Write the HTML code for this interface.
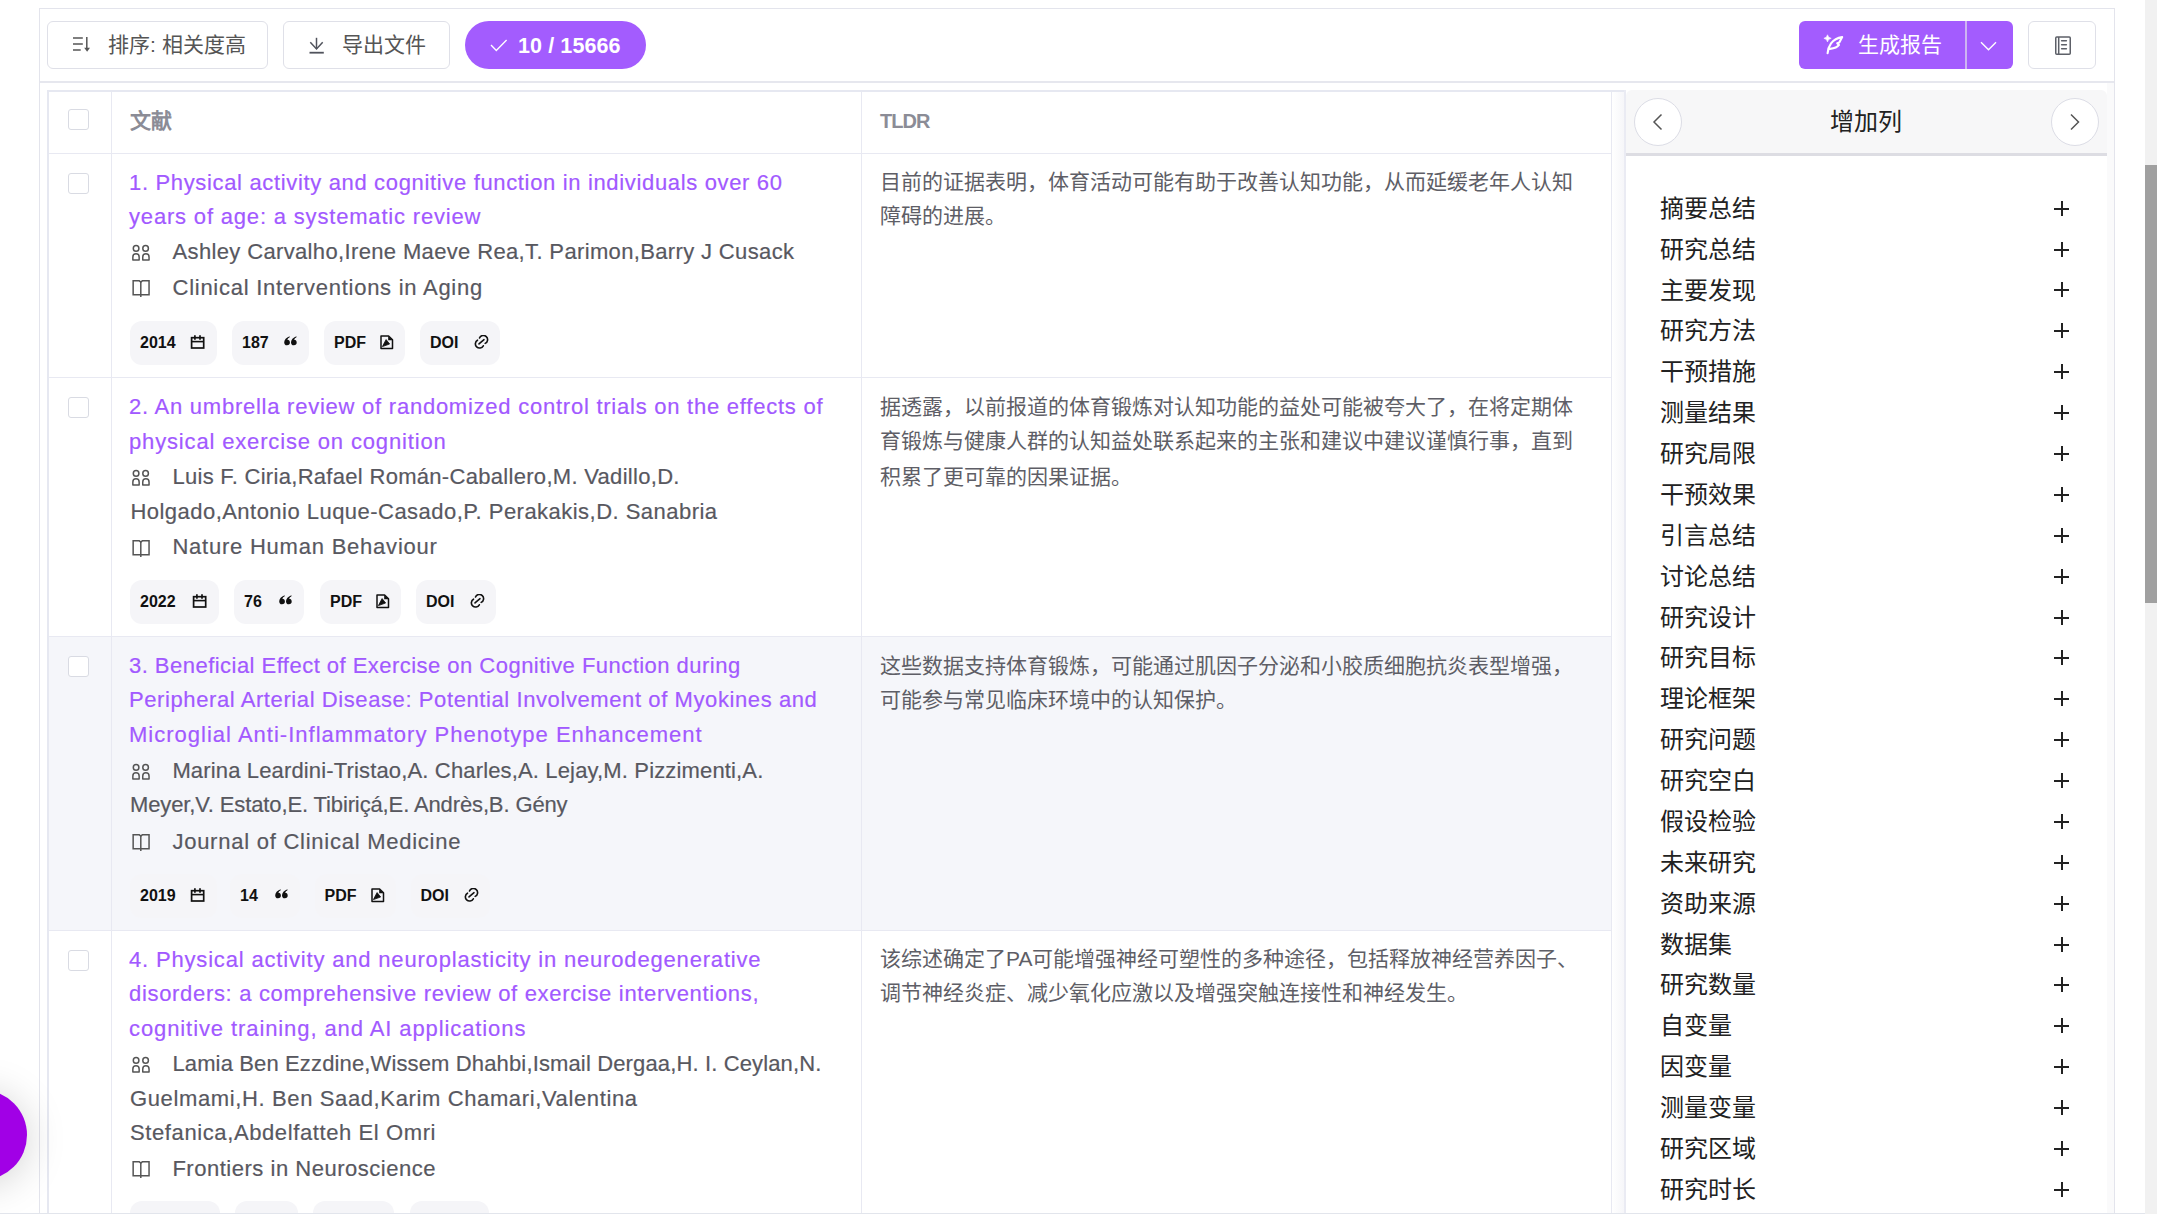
<!DOCTYPE html>
<html lang="zh-CN"><head><meta charset="utf-8"><title>文献列表</title>
<style>
html,body{margin:0;padding:0;}
body{width:2157px;height:1214px;overflow:hidden;position:relative;background:#fff;font-family:"Liberation Sans",sans-serif;}
.ab{position:absolute;}
.ln{position:absolute;white-space:nowrap;line-height:34px;font-size:22px;-webkit-text-stroke:0.2px currentColor;}
.t{color:#a259ff;}
.a{color:#58585f;}
.cj{position:absolute;white-space:nowrap;line-height:34px;font-size:21px;color:#5e5e66;}
.btn{position:absolute;box-sizing:border-box;border:1px solid #dfe0e8;border-radius:6px;background:#fff;}
.chip{position:absolute;box-sizing:border-box;height:44px;border-radius:12px;background:#f5f5f8;}
.chip span{position:absolute;font-weight:bold;font-size:16px;line-height:16px;color:#111;}
.chip svg{display:block;}
.cb{position:absolute;box-sizing:border-box;width:21px;height:21px;border:1.5px solid #d9dbe3;border-radius:3px;background:#fff;}
.it{position:absolute;left:1660px;font-size:24px;line-height:30px;color:#222;white-space:nowrap;}
.pl{position:absolute;left:2054px;width:15px;height:15px;}
.pl:before{content:"";position:absolute;left:0;top:7px;width:15px;height:2px;background:#222;}
.pl:after{content:"";position:absolute;left:6.5px;top:0;width:2px;height:15px;background:#222;}
</style></head><body>

<div class="ab" style="left:39px;top:8px;width:2076px;height:1300px;box-sizing:border-box;border:1px solid #e3e4ec;border-bottom:none"></div>
<div class="ab" style="left:40px;top:81px;width:2074px;height:2px;background:#e6e7ee"></div>
<div class="ab" style="left:49px;top:636px;width:1562px;height:294px;background:#f5f6fa"></div>
<div class="ab" style="left:47px;top:90px;width:2px;height:1200px;background:#e6e8f1"></div>
<div class="ab" style="left:47px;top:90px;width:1579px;height:2px;background:#e6e8f1"></div>
<div class="ab" style="left:111px;top:92px;width:1px;height:1200px;background:#e8e9f2"></div>
<div class="ab" style="left:861px;top:92px;width:1px;height:1200px;background:#e8e9f2"></div>
<div class="ab" style="left:1611px;top:92px;width:1px;height:1200px;background:#e8e9f2"></div>
<div class="ab" style="left:49px;top:153px;width:1562px;height:1px;background:#e8e9f2"></div>
<div class="ab" style="left:49px;top:377px;width:1562px;height:1px;background:#e8e9f2"></div>
<div class="ab" style="left:49px;top:636px;width:1562px;height:1px;background:#e8e9f2"></div>
<div class="ab" style="left:49px;top:930px;width:1562px;height:1px;background:#e8e9f2"></div>
<div class="ab" style="left:1612px;top:92px;width:12px;height:1200px;background:linear-gradient(to right,#ffffff,#f6f6f9)"></div>
<div class="ab" style="left:1624px;top:90px;width:2px;height:1200px;background:#eaebf3"></div>
<div class="cb" style="left:68px;top:109px"></div>
<div class="cb" style="left:68px;top:173px"></div>
<div class="cb" style="left:68px;top:397px"></div>
<div class="cb" style="left:68px;top:656px"></div>
<div class="cb" style="left:68px;top:950px"></div>
<div class="ab" style="left:130px;top:107px;font-size:21px;line-height:28px;font-weight:bold;color:#8b8c96">文献</div>
<div class="ab" style="left:880px;top:106.5px;font-size:20px;line-height:28px;font-weight:bold;color:#8b8c96;letter-spacing:-1px">TLDR</div>
<div class="ln t" style="left:129.0px;top:165.7px;letter-spacing:0.658px">1. Physical activity and cognitive function in individuals over 60</div>
<div class="ln t" style="left:129.0px;top:199.6px;letter-spacing:0.820px">years of age: a systematic review</div>
<div class="ln a" style="left:172.5px;top:235.2px;letter-spacing:0.356px">Ashley Carvalho,Irene Maeve Rea,T. Parimon,Barry J Cusack</div>
<div class="ln a" style="left:172.5px;top:270.5px;letter-spacing:0.744px">Clinical Interventions in Aging</div>
<div class="ln t" style="left:129.0px;top:390.2px;letter-spacing:0.757px">2. An umbrella review of randomized control trials on the effects of</div>
<div class="ln t" style="left:129.0px;top:424.8px;letter-spacing:0.842px">physical exercise on cognition</div>
<div class="ln a" style="left:172.4px;top:460.0px;letter-spacing:0.301px">Luis F. Ciria,Rafael Román-Caballero,M. Vadillo,D.</div>
<div class="ln a" style="left:130.4px;top:494.9px;letter-spacing:0.471px">Holgado,Antonio Luque-Casado,P. Perakakis,D. Sanabria</div>
<div class="ln a" style="left:172.4px;top:530.4px;letter-spacing:0.774px">Nature Human Behaviour</div>
<div class="ln t" style="left:129.0px;top:649.0px;letter-spacing:0.470px">3. Beneficial Effect of Exercise on Cognitive Function during</div>
<div class="ln t" style="left:129.0px;top:683.4px;letter-spacing:0.592px">Peripheral Arterial Disease: Potential Involvement of Myokines and</div>
<div class="ln t" style="left:129.0px;top:717.5px;letter-spacing:1.007px">Microglial Anti-Inflammatory Phenotype Enhancement</div>
<div class="ln a" style="left:172.4px;top:753.7px;letter-spacing:0.151px">Marina Leardini-Tristao,A. Charles,A. Lejay,M. Pizzimenti,A.</div>
<div class="ln a" style="left:130.0px;top:788.2px;letter-spacing:-0.124px">Meyer,V. Estato,E. Tibiriçá,E. Andrès,B. Gény</div>
<div class="ln a" style="left:172.4px;top:824.6px;letter-spacing:0.752px">Journal of Clinical Medicine</div>
<div class="ln t" style="left:129.0px;top:942.9px;letter-spacing:0.825px">4. Physical activity and neuroplasticity in neurodegenerative</div>
<div class="ln t" style="left:129.0px;top:976.9px;letter-spacing:0.680px">disorders: a comprehensive review of exercise interventions,</div>
<div class="ln t" style="left:129.0px;top:1012.0px;letter-spacing:0.905px">cognitive training, and AI applications</div>
<div class="ln a" style="left:172.4px;top:1047.0px;letter-spacing:0.138px">Lamia Ben Ezzdine,Wissem Dhahbi,Ismail Dergaa,H. I. Ceylan,N.</div>
<div class="ln a" style="left:130.0px;top:1082.0px;letter-spacing:0.625px">Guelmami,H. Ben Saad,Karim Chamari,Valentina</div>
<div class="ln a" style="left:130.0px;top:1116.0px;letter-spacing:0.604px">Stefanica,Abdelfatteh El Omri</div>
<div class="ln a" style="left:172.4px;top:1151.6px;letter-spacing:0.518px">Frontiers in Neuroscience</div>
<div class="cj" style="left:880px;top:165.2px">目前的证据表明，体育活动可能有助于改善认知功能，从而延缓老年人认知</div>
<div class="cj" style="left:880px;top:199.1px">障碍的进展。</div>
<div class="cj" style="left:880px;top:389.7px">据透露，以前报道的体育锻炼对认知功能的益处可能被夸大了，在将定期体</div>
<div class="cj" style="left:880px;top:424.3px">育锻炼与健康人群的认知益处联系起来的主张和建议中建议谨慎行事，直到</div>
<div class="cj" style="left:880px;top:459.5px">积累了更可靠的因果证据。</div>
<div class="cj" style="left:880px;top:648.5px">这些数据支持体育锻炼，可能通过肌因子分泌和小胶质细胞抗炎表型增强，</div>
<div class="cj" style="left:880px;top:682.9px">可能参与常见临床环境中的认知保护。</div>
<div class="cj" style="left:880px;top:942.4px">该综述确定了PA可能增强神经可塑性的多种途径，包括释放神经营养因子、</div>
<div class="cj" style="left:880px;top:976.4px">调节神经炎症、减少氧化应激以及增强突触连接性和神经发生。</div>
<div class="btn" style="left:47px;top:21px;width:221px;height:48px"></div>
<svg class="ab" style="left:68px;top:32px" width="28" height="26" viewBox="0 0 28 26">
<path d="M5 5.9 H14.8 M5 12 H14.8 M5 18 H12.7" stroke="#555" stroke-width="1.5"/>
<path d="M18.8 5 V16.5" stroke="#555" stroke-width="1.5"/><path d="M16.2 15.8 H22 L19.1 19.8 Z" fill="#555"/></svg>
<div class="ab" style="left:108px;top:31px;font-size:21px;line-height:28px;color:#555;white-space:nowrap">排序: 相关度高</div>
<div class="btn" style="left:283px;top:21px;width:167px;height:48px"></div>
<svg class="ab" style="left:308px;top:36px" width="18" height="19" viewBox="0 0 18 19">
<path d="M8.5 1.8 V13" stroke="#50535c" stroke-width="1.5" fill="none"/><path d="M2.3 6.3 L8.5 13 L14.7 6.3" stroke="#50535c" stroke-width="1.5" fill="none"/>
<path d="M1.5 16.7 H15.8" stroke="#50535c" stroke-width="1.8" fill="none"/></svg>
<div class="ab" style="left:342px;top:31px;font-size:21px;line-height:28px;color:#555;white-space:nowrap">导出文件</div>
<div class="ab" style="left:465px;top:21px;width:181px;height:48px;border-radius:24px;background:#a35cfe"></div>
<svg class="ab" style="left:490px;top:39px" width="18" height="13" viewBox="0 0 18 13">
<path d="M1 6 L6.3 11.5 L16.6 1" stroke="#fff" stroke-width="1.35" fill="none"/></svg>
<div class="ab" style="left:518px;top:32px;font-size:21.5px;line-height:28px;color:#fff;font-weight:bold;white-space:nowrap;letter-spacing:0.1px">10 / 15666</div>
<div class="ab" style="left:1799px;top:21px;width:214px;height:48px;border-radius:6px;background:#a35cfe"></div>
<div class="ab" style="left:1965px;top:21px;width:1.5px;height:48px;background:#cdb4f2"></div>
<svg class="ab" style="left:1818px;top:30px" width="30" height="30" viewBox="0 0 30 30">
<path d="M9.5 4.8 Q10 7.8 13.2 8.3 Q10 8.9 9.5 11.9 Q9 8.9 5.9 8.3 Q9 7.8 9.5 4.8 Z" fill="#fff" stroke="#fff" stroke-width="0.6" stroke-linejoin="round"/>
<path d="M9.6 23.3 C 10 17, 13.5 8.5, 24.2 7.1 L 21.3 12.6 L 19.2 13.2 L 21 14.9 C 19.2 17.6, 16 18.4, 12 18.9" stroke="#fff" stroke-width="2.1" fill="none" stroke-linejoin="round" stroke-linecap="round"/></svg>
<div class="ab" style="left:1858px;top:31px;font-size:21px;line-height:28px;color:#fff;white-space:nowrap">生成报告</div>
<svg class="ab" style="left:1980px;top:40px" width="18" height="11" viewBox="0 0 18 11">
<path d="M1 2.3 L8.5 9.7 L16 2.3" stroke="#fff" stroke-width="1.4" fill="none"/></svg>
<div class="btn" style="left:2028px;top:21px;width:68px;height:48px"></div>
<svg class="ab" style="left:2053px;top:35px" width="19" height="21" viewBox="0 0 19 21">
<rect x="2.75" y="1.95" width="14.5" height="17.3" rx="1" stroke="#5d6068" stroke-width="1.5" fill="none"/>
<path d="M5.7 2 V19" stroke="#5d6068" stroke-width="1.5"/>
<path d="M8.6 5.8 H13.4 M8.6 9.7 H13.4 M8.6 13.7 H13.4" stroke="#5d6068" stroke-width="1.5" stroke-linecap="round"/></svg>
<svg class="ab" style="left:131px;top:244.0px" width="20" height="18" viewBox="0 0 20 18">
<circle cx="5.1" cy="4.4" r="2.8" stroke="#555" stroke-width="1.5" fill="none"/><circle cx="14.6" cy="4.4" r="2.8" stroke="#555" stroke-width="1.5" fill="none"/>
<path d="M1.85 16 V12.9 A3.15 3.15 0 0 1 8.15 12.9 V16 Z" stroke="#555" stroke-width="1.5" fill="none" stroke-linejoin="round"/>
<path d="M11.75 16 V12.9 A3.15 3.15 0 0 1 18.05 12.9 V16 Z" stroke="#555" stroke-width="1.5" fill="none" stroke-linejoin="round"/></svg>
<svg class="ab" style="left:131px;top:468.8px" width="20" height="18" viewBox="0 0 20 18">
<circle cx="5.1" cy="4.4" r="2.8" stroke="#555" stroke-width="1.5" fill="none"/><circle cx="14.6" cy="4.4" r="2.8" stroke="#555" stroke-width="1.5" fill="none"/>
<path d="M1.85 16 V12.9 A3.15 3.15 0 0 1 8.15 12.9 V16 Z" stroke="#555" stroke-width="1.5" fill="none" stroke-linejoin="round"/>
<path d="M11.75 16 V12.9 A3.15 3.15 0 0 1 18.05 12.9 V16 Z" stroke="#555" stroke-width="1.5" fill="none" stroke-linejoin="round"/></svg>
<svg class="ab" style="left:131px;top:762.5px" width="20" height="18" viewBox="0 0 20 18">
<circle cx="5.1" cy="4.4" r="2.8" stroke="#555" stroke-width="1.5" fill="none"/><circle cx="14.6" cy="4.4" r="2.8" stroke="#555" stroke-width="1.5" fill="none"/>
<path d="M1.85 16 V12.9 A3.15 3.15 0 0 1 8.15 12.9 V16 Z" stroke="#555" stroke-width="1.5" fill="none" stroke-linejoin="round"/>
<path d="M11.75 16 V12.9 A3.15 3.15 0 0 1 18.05 12.9 V16 Z" stroke="#555" stroke-width="1.5" fill="none" stroke-linejoin="round"/></svg>
<svg class="ab" style="left:131px;top:1055.8px" width="20" height="18" viewBox="0 0 20 18">
<circle cx="5.1" cy="4.4" r="2.8" stroke="#555" stroke-width="1.5" fill="none"/><circle cx="14.6" cy="4.4" r="2.8" stroke="#555" stroke-width="1.5" fill="none"/>
<path d="M1.85 16 V12.9 A3.15 3.15 0 0 1 8.15 12.9 V16 Z" stroke="#555" stroke-width="1.5" fill="none" stroke-linejoin="round"/>
<path d="M11.75 16 V12.9 A3.15 3.15 0 0 1 18.05 12.9 V16 Z" stroke="#555" stroke-width="1.5" fill="none" stroke-linejoin="round"/></svg>
<svg class="ab" style="left:131px;top:279.0px" width="20" height="20" viewBox="0 0 20 20">
<path d="M2.15 1.85 H8.3 L9.8 3 L11.3 1.85 H18.05 V15.75 H2.15 Z" stroke="#555" stroke-width="1.5" fill="none"/>
<path d="M9.8 2.6 V18" stroke="#555" stroke-width="1.5" fill="none"/></svg>
<svg class="ab" style="left:131px;top:538.9px" width="20" height="20" viewBox="0 0 20 20">
<path d="M2.15 1.85 H8.3 L9.8 3 L11.3 1.85 H18.05 V15.75 H2.15 Z" stroke="#555" stroke-width="1.5" fill="none"/>
<path d="M9.8 2.6 V18" stroke="#555" stroke-width="1.5" fill="none"/></svg>
<svg class="ab" style="left:131px;top:833.1px" width="20" height="20" viewBox="0 0 20 20">
<path d="M2.15 1.85 H8.3 L9.8 3 L11.3 1.85 H18.05 V15.75 H2.15 Z" stroke="#555" stroke-width="1.5" fill="none"/>
<path d="M9.8 2.6 V18" stroke="#555" stroke-width="1.5" fill="none"/></svg>
<svg class="ab" style="left:131px;top:1160.1px" width="20" height="20" viewBox="0 0 20 20">
<path d="M2.15 1.85 H8.3 L9.8 3 L11.3 1.85 H18.05 V15.75 H2.15 Z" stroke="#555" stroke-width="1.5" fill="none"/>
<path d="M9.8 2.6 V18" stroke="#555" stroke-width="1.5" fill="none"/></svg>
<div class="chip" style="left:130px;top:321px;width:87.0px"><span style="left:10px;top:14px">2014</span><div style="position:absolute;right:11px;top:14px;line-height:0"><svg width="16" height="15" viewBox="0 0 16 15"><rect x="1.6" y="2.7" width="12.1" height="10.3" stroke="#111" stroke-width="1.7" fill="none"/><path d="M1.5 6.6 H14" stroke="#111" stroke-width="1.6"/><path d="M4.9 0.2 V4.8 M10 0.2 V4.8" stroke="#111" stroke-width="1.7"/></svg></div></div>
<div class="chip" style="left:232px;top:321px;width:77.0px"><span style="left:10px;top:14px">187</span><div style="position:absolute;right:11px;top:14px;line-height:0"><svg width="15" height="12" viewBox="0 0 15 12"><path d="M6.6 1.2 Q1.4 3.2 1.2 7.2 Q1.2 10.3 4 10.3 Q6.9 10.3 6.9 7.5 Q6.9 4.9 4.3 4.7 Q4.9 3.1 6.7 2.2 Z" fill="#111"/><path d="M13.4 1.2 Q8.2 3.2 8 7.2 Q8 10.3 10.8 10.3 Q13.7 10.3 13.7 7.5 Q13.7 4.9 11.1 4.7 Q11.7 3.1 13.5 2.2 Z" fill="#111"/></svg></div></div>
<div class="chip" style="left:324px;top:321px;width:81.0px"><span style="left:10px;top:14px">PDF</span><div style="position:absolute;right:11px;top:14px;line-height:0"><svg width="14" height="15" viewBox="0 0 14 15"><path d="M1 1 H8.6 L12.5 4.9 V13.6 H1 Z" stroke="#111" stroke-width="1.5" fill="none" stroke-linejoin="round"/><path d="M8.2 1 V5.2 H12.5 Z" fill="#111"/><path d="M2.4 11.6 L6.1 4.6 L9.6 9 Z" fill="#111" stroke="#111" stroke-width="0.8" stroke-linejoin="round"/></svg></div></div>
<div class="chip" style="left:420px;top:321px;width:80.0px"><span style="left:10px;top:14px">DOI</span><div style="position:absolute;right:11px;top:14px;line-height:0"><svg width="15" height="14" viewBox="0 0 15 14"><path d="M5 8.9 L10 4.7" stroke="#111" stroke-width="1.6" stroke-linecap="round"/><path d="M3.5 5.2 A4.2 4.2 0 1 0 9.3 10.8" stroke="#111" stroke-width="1.6" fill="none" stroke-linecap="round"/><path d="M5.5 3 A4.2 4.2 0 1 1 11.2 8.4" stroke="#111" stroke-width="1.6" fill="none" stroke-linecap="round"/></svg></div></div>
<div class="chip" style="left:130px;top:580px;width:89.0px"><span style="left:10px;top:14px">2022</span><div style="position:absolute;right:11px;top:14px;line-height:0"><svg width="16" height="15" viewBox="0 0 16 15"><rect x="1.6" y="2.7" width="12.1" height="10.3" stroke="#111" stroke-width="1.7" fill="none"/><path d="M1.5 6.6 H14" stroke="#111" stroke-width="1.6"/><path d="M4.9 0.2 V4.8 M10 0.2 V4.8" stroke="#111" stroke-width="1.7"/></svg></div></div>
<div class="chip" style="left:234px;top:580px;width:70.0px"><span style="left:10px;top:14px">76</span><div style="position:absolute;right:11px;top:14px;line-height:0"><svg width="15" height="12" viewBox="0 0 15 12"><path d="M6.6 1.2 Q1.4 3.2 1.2 7.2 Q1.2 10.3 4 10.3 Q6.9 10.3 6.9 7.5 Q6.9 4.9 4.3 4.7 Q4.9 3.1 6.7 2.2 Z" fill="#111"/><path d="M13.4 1.2 Q8.2 3.2 8 7.2 Q8 10.3 10.8 10.3 Q13.7 10.3 13.7 7.5 Q13.7 4.9 11.1 4.7 Q11.7 3.1 13.5 2.2 Z" fill="#111"/></svg></div></div>
<div class="chip" style="left:320px;top:580px;width:80.5px"><span style="left:10px;top:14px">PDF</span><div style="position:absolute;right:11px;top:14px;line-height:0"><svg width="14" height="15" viewBox="0 0 14 15"><path d="M1 1 H8.6 L12.5 4.9 V13.6 H1 Z" stroke="#111" stroke-width="1.5" fill="none" stroke-linejoin="round"/><path d="M8.2 1 V5.2 H12.5 Z" fill="#111"/><path d="M2.4 11.6 L6.1 4.6 L9.6 9 Z" fill="#111" stroke="#111" stroke-width="0.8" stroke-linejoin="round"/></svg></div></div>
<div class="chip" style="left:416px;top:580px;width:79.5px"><span style="left:10px;top:14px">DOI</span><div style="position:absolute;right:11px;top:14px;line-height:0"><svg width="15" height="14" viewBox="0 0 15 14"><path d="M5 8.9 L10 4.7" stroke="#111" stroke-width="1.6" stroke-linecap="round"/><path d="M3.5 5.2 A4.2 4.2 0 1 0 9.3 10.8" stroke="#111" stroke-width="1.6" fill="none" stroke-linecap="round"/><path d="M5.5 3 A4.2 4.2 0 1 1 11.2 8.4" stroke="#111" stroke-width="1.6" fill="none" stroke-linecap="round"/></svg></div></div>
<div class="chip" style="left:130px;top:874px;width:86.5px"><span style="left:10px;top:14px">2019</span><div style="position:absolute;right:11px;top:14px;line-height:0"><svg width="16" height="15" viewBox="0 0 16 15"><rect x="1.6" y="2.7" width="12.1" height="10.3" stroke="#111" stroke-width="1.7" fill="none"/><path d="M1.5 6.6 H14" stroke="#111" stroke-width="1.6"/><path d="M4.9 0.2 V4.8 M10 0.2 V4.8" stroke="#111" stroke-width="1.7"/></svg></div></div>
<div class="chip" style="left:230px;top:874px;width:70.0px"><span style="left:10px;top:14px">14</span><div style="position:absolute;right:11px;top:14px;line-height:0"><svg width="15" height="12" viewBox="0 0 15 12"><path d="M6.6 1.2 Q1.4 3.2 1.2 7.2 Q1.2 10.3 4 10.3 Q6.9 10.3 6.9 7.5 Q6.9 4.9 4.3 4.7 Q4.9 3.1 6.7 2.2 Z" fill="#111"/><path d="M13.4 1.2 Q8.2 3.2 8 7.2 Q8 10.3 10.8 10.3 Q13.7 10.3 13.7 7.5 Q13.7 4.9 11.1 4.7 Q11.7 3.1 13.5 2.2 Z" fill="#111"/></svg></div></div>
<div class="chip" style="left:314.5px;top:874px;width:81.0px"><span style="left:10px;top:14px">PDF</span><div style="position:absolute;right:11px;top:14px;line-height:0"><svg width="14" height="15" viewBox="0 0 14 15"><path d="M1 1 H8.6 L12.5 4.9 V13.6 H1 Z" stroke="#111" stroke-width="1.5" fill="none" stroke-linejoin="round"/><path d="M8.2 1 V5.2 H12.5 Z" fill="#111"/><path d="M2.4 11.6 L6.1 4.6 L9.6 9 Z" fill="#111" stroke="#111" stroke-width="0.8" stroke-linejoin="round"/></svg></div></div>
<div class="chip" style="left:410.5px;top:874px;width:79.5px"><span style="left:10px;top:14px">DOI</span><div style="position:absolute;right:11px;top:14px;line-height:0"><svg width="15" height="14" viewBox="0 0 15 14"><path d="M5 8.9 L10 4.7" stroke="#111" stroke-width="1.6" stroke-linecap="round"/><path d="M3.5 5.2 A4.2 4.2 0 1 0 9.3 10.8" stroke="#111" stroke-width="1.6" fill="none" stroke-linecap="round"/><path d="M5.5 3 A4.2 4.2 0 1 1 11.2 8.4" stroke="#111" stroke-width="1.6" fill="none" stroke-linecap="round"/></svg></div></div>
<div class="chip" style="left:130px;top:1201px;width:89.6px"><span style="left:10px;top:14px">2021</span><div style="position:absolute;right:11px;top:14px;line-height:0"><svg width="16" height="15" viewBox="0 0 16 15"><rect x="1.6" y="2.7" width="12.1" height="10.3" stroke="#111" stroke-width="1.7" fill="none"/><path d="M1.5 6.6 H14" stroke="#111" stroke-width="1.6"/><path d="M4.9 0.2 V4.8 M10 0.2 V4.8" stroke="#111" stroke-width="1.7"/></svg></div></div>
<div class="chip" style="left:235px;top:1201px;width:63.0px"><span style="left:10px;top:14px">0</span><div style="position:absolute;right:11px;top:14px;line-height:0"><svg width="15" height="12" viewBox="0 0 15 12"><path d="M6.6 1.2 Q1.4 3.2 1.2 7.2 Q1.2 10.3 4 10.3 Q6.9 10.3 6.9 7.5 Q6.9 4.9 4.3 4.7 Q4.9 3.1 6.7 2.2 Z" fill="#111"/><path d="M13.4 1.2 Q8.2 3.2 8 7.2 Q8 10.3 10.8 10.3 Q13.7 10.3 13.7 7.5 Q13.7 4.9 11.1 4.7 Q11.7 3.1 13.5 2.2 Z" fill="#111"/></svg></div></div>
<div class="chip" style="left:313.4px;top:1201px;width:80.3px"><span style="left:10px;top:14px">PDF</span><div style="position:absolute;right:11px;top:14px;line-height:0"><svg width="14" height="15" viewBox="0 0 14 15"><path d="M1 1 H8.6 L12.5 4.9 V13.6 H1 Z" stroke="#111" stroke-width="1.5" fill="none" stroke-linejoin="round"/><path d="M8.2 1 V5.2 H12.5 Z" fill="#111"/><path d="M2.4 11.6 L6.1 4.6 L9.6 9 Z" fill="#111" stroke="#111" stroke-width="0.8" stroke-linejoin="round"/></svg></div></div>
<div class="chip" style="left:409.5px;top:1201px;width:79.0px"><span style="left:10px;top:14px">DOI</span><div style="position:absolute;right:11px;top:14px;line-height:0"><svg width="15" height="14" viewBox="0 0 15 14"><path d="M5 8.9 L10 4.7" stroke="#111" stroke-width="1.6" stroke-linecap="round"/><path d="M3.5 5.2 A4.2 4.2 0 1 0 9.3 10.8" stroke="#111" stroke-width="1.6" fill="none" stroke-linecap="round"/><path d="M5.5 3 A4.2 4.2 0 1 1 11.2 8.4" stroke="#111" stroke-width="1.6" fill="none" stroke-linecap="round"/></svg></div></div>
<div class="ab" style="left:1626px;top:90px;width:481px;height:1200px;background:#fff"></div>
<div class="ab" style="left:1626px;top:90px;width:481px;height:63px;background:#f7f7f8;border-radius:6px 6px 0 0"></div>
<div class="ab" style="left:1626px;top:153px;width:481px;height:3px;background:#dddde3"></div>
<div class="ab" style="left:2107px;top:83px;width:7px;height:1200px;background:#fafafb"></div>
<div class="ab" style="left:1634px;top:98px;width:48px;height:48px;box-sizing:border-box;border:1px solid #dcdde6;border-radius:50%;background:#fff"></div>
<svg class="ab" style="left:1652px;top:113px" width="12" height="18" viewBox="0 0 12 18"><path d="M9.5 1.5 L2 9 L9.5 16.5" stroke="#555" stroke-width="1.5" fill="none"/></svg>
<div class="ab" style="left:2051px;top:98px;width:48px;height:48px;box-sizing:border-box;border:1px solid #dcdde6;border-radius:50%;background:#fff"></div>
<svg class="ab" style="left:2069px;top:113px" width="12" height="18" viewBox="0 0 12 18"><path d="M2 1.5 L9.5 9 L2 16.5" stroke="#555" stroke-width="1.5" fill="none"/></svg>
<div class="ab" style="left:1830px;top:107px;font-size:24px;line-height:30px;color:#222;white-space:nowrap">增加列</div>
<div class="it" style="top:193.7px">摘要总结</div>
<div class="pl" style="top:201px"></div>
<div class="it" style="top:234.6px">研究总结</div>
<div class="pl" style="top:242px"></div>
<div class="it" style="top:275.5px">主要发现</div>
<div class="pl" style="top:282px"></div>
<div class="it" style="top:316.3px">研究方法</div>
<div class="pl" style="top:323px"></div>
<div class="it" style="top:357.2px">干预措施</div>
<div class="pl" style="top:364px"></div>
<div class="it" style="top:398.1px">测量结果</div>
<div class="pl" style="top:405px"></div>
<div class="it" style="top:439.0px">研究局限</div>
<div class="pl" style="top:446px"></div>
<div class="it" style="top:479.9px">干预效果</div>
<div class="pl" style="top:487px"></div>
<div class="it" style="top:520.7px">引言总结</div>
<div class="pl" style="top:528px"></div>
<div class="it" style="top:561.6px">讨论总结</div>
<div class="pl" style="top:569px"></div>
<div class="it" style="top:602.5px">研究设计</div>
<div class="pl" style="top:610px"></div>
<div class="it" style="top:643.4px">研究目标</div>
<div class="pl" style="top:650px"></div>
<div class="it" style="top:684.3px">理论框架</div>
<div class="pl" style="top:691px"></div>
<div class="it" style="top:725.1px">研究问题</div>
<div class="pl" style="top:732px"></div>
<div class="it" style="top:766.0px">研究空白</div>
<div class="pl" style="top:773px"></div>
<div class="it" style="top:806.9px">假设检验</div>
<div class="pl" style="top:814px"></div>
<div class="it" style="top:847.8px">未来研究</div>
<div class="pl" style="top:855px"></div>
<div class="it" style="top:888.7px">资助来源</div>
<div class="pl" style="top:896px"></div>
<div class="it" style="top:929.5px">数据集</div>
<div class="pl" style="top:937px"></div>
<div class="it" style="top:970.4px">研究数量</div>
<div class="pl" style="top:977px"></div>
<div class="it" style="top:1011.3px">自变量</div>
<div class="pl" style="top:1018px"></div>
<div class="it" style="top:1052.2px">因变量</div>
<div class="pl" style="top:1059px"></div>
<div class="it" style="top:1093.1px">测量变量</div>
<div class="pl" style="top:1100px"></div>
<div class="it" style="top:1133.9px">研究区域</div>
<div class="pl" style="top:1141px"></div>
<div class="it" style="top:1174.8px">研究时长</div>
<div class="pl" style="top:1182px"></div>
<div class="ab" style="left:2145px;top:0;width:12px;height:1214px;background:#f1f1f1"></div>
<div class="ab" style="left:2145px;top:165px;width:12px;height:438px;background:#a0a0a0"></div>
<div class="ab" style="left:-63px;top:1090px;width:90px;height:90px;border-radius:50%;background:#a100e6;box-shadow:0 4px 40px rgba(0,0,0,0.18)"></div>
<div class="ab" style="left:0;top:1213px;width:2145px;height:1px;background:#e2e5ec"></div>
</body></html>
